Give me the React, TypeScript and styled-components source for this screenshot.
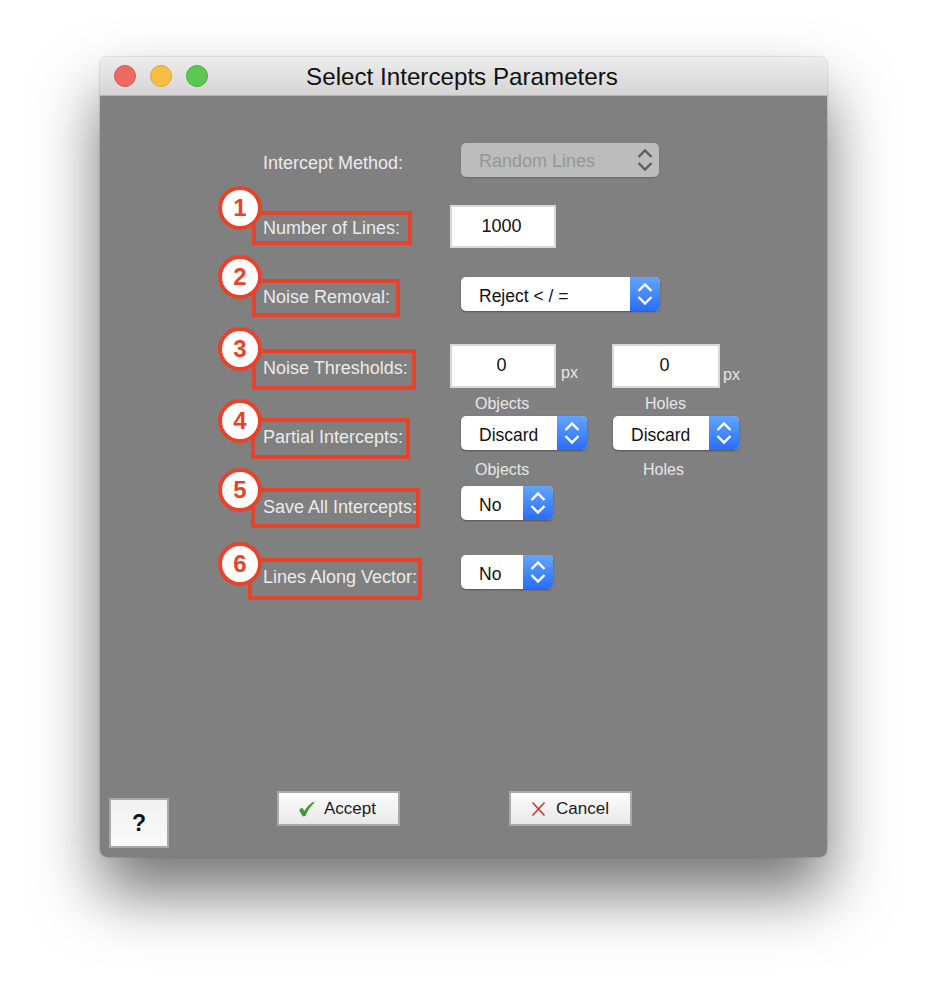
import { ReactNode } from "react";
import styled, { createGlobalStyle } from "styled-components";

const GlobalStyle = createGlobalStyle`
  html, body {
    margin: 0;
    background: #ffffff;
  }
  * {
    box-sizing: border-box;
  }
`;

const Chevrons = ({ color }: { color: string }) => (
  <svg width="16" height="24" viewBox="0 0 16 24" fill="none" stroke={color} strokeWidth="2.4">
    <polyline points="1.5,9 8,2.5 14.5,9" />
    <polyline points="1.5,15 8,21.5 14.5,15" />
  </svg>
);

interface CalloutProps {
  num: number;
  left: number;
  top: number;
  width: number;
  height: number;
  circleTop: number;
}

const Callout = ({ num, left, top, width, height, circleTop }: CalloutProps) => (
  <>
    <RedBox $left={left} $top={top} $w={width} $h={height} />
    <Badge $top={circleTop}>{num}</Badge>
  </>
);

const Select = ({ value, width }: { value: string; width: number }) => (
  <SelectBox $w={width}>
    <SelectText>{value}</SelectText>
    <Stepper>
      <Chevrons color="#ffffff" />
    </Stepper>
  </SelectBox>
);

const FormRow = ({ gap, children }: { gap: number; children: ReactNode }) => (
  <Row $gap={gap}>{children}</Row>
);

const App = () => {
  return (
    <Page>
      <GlobalStyle />
      <Window>
        <TitleBar>
          <Lights>
            <Light $color="#ee6a60" $edge="#d9564c" />
            <Light $color="#f8bd45" $edge="#dfa436" />
            <Light $color="#5cc84f" $edge="#4bae40" />
          </Lights>
          <Title>Select Intercepts Parameters</Title>
        </TitleBar>
        <Body>
          <Form>
            <FormRow gap={47}>
              <Label $drop={10}>Intercept Method:</Label>
              <DisabledSelect>
                <span>Random Lines</span>
                <Chevrons color="#5f5f5f" />
              </DisabledSelect>
            </FormRow>

            <FormRow gap={28}>
              <Label $drop={13}>
                Number of Lines:
                <Callout num={1} left={-11} top={-7} width={160} height={34} circleTop={-32} />
              </Label>
              <NumberInput $w={106} $h={43} $first>1000</NumberInput>
            </FormRow>

            <FormRow gap={29}>
              <Label $drop={10}>
                Noise Removal:
                <Callout num={2} left={-11} top={-8} width={148} height={38} circleTop={-32} />
              </Label>
              <Select value="Reject < / =" width={199} />
            </FormRow>

            <FormRow gap={33}>
              <Label $drop={14}>
                Noise Thresholds:
                <Callout num={3} left={-11} top={-9} width={164} height={41} circleTop={-31} />
              </Label>
              <NumberInput $w={106} $h={44} $first>0</NumberInput>
              <Unit $drop={20} $w={56} $pad={5}>px</Unit>
              <NumberInput $w={108} $h={44}>0</NumberInput>
              <Unit $drop={22} $w={30} $pad={3}>px</Unit>
            </FormRow>

            <CaptionRow $gap={6}>
              <Caption $w={170}>Objects</Caption>
              <Caption>Holes</Caption>
            </CaptionRow>

            <FormRow gap={2}>
              <Label $drop={11}>
                Partial Intercepts:
                <Callout num={4} left={-12} top={-9} width={159} height={41} circleTop={-28} />
              </Label>
              <Select value="Discard" width={126} />
              <RowSpacer />
              <Select value="Discard" width={126} />
            </FormRow>

            <CaptionRow $gap={10}>
              <Caption $w={168}>Objects</Caption>
              <Caption>Holes</Caption>
            </CaptionRow>

            <FormRow gap={6}>
              <Label $drop={11}>
                Save All Intercepts:
                <Callout num={5} left={-12} top={-9} width={169} height={40} circleTop={-29} />
              </Label>
              <Select value="No" width={92} />
            </FormRow>

            <FormRow gap={35}>
              <Label $drop={12}>
                Lines Along Vector:
                <Callout num={6} left={-15} top={-9} width={174} height={42} circleTop={-25} />
              </Label>
              <Select value="No" width={92} />
            </FormRow>
          </Form>

          <Footer>
            <HelpButton>?</HelpButton>
            <ActionButton $offset={108}>
              <svg width="17" height="16" viewBox="0 0 17 16">
                <path d="M1 9 L4 6.6 L6.4 10 C8.6 6.4 11.6 3 15.6 0.8 L16.4 1.8 C12.6 5.2 9.6 9.6 7.4 15 L4.6 15.4 C3.6 12.9 2.4 10.8 1 9 Z" fill="#3f9a2d" />
              </svg>
              Accept
            </ActionButton>
            <ActionButton $offset={109}>
              <svg width="17" height="16" viewBox="0 0 17 16" fill="none" stroke="#d0342c" strokeWidth="1.6">
                <path d="M2.5 1.5 L14.5 14.5 M14.5 1.5 L2.5 14.5" />
              </svg>
              Cancel
            </ActionButton>
          </Footer>
        </Body>
      </Window>
    </Page>
  );
};

export default App;

const fontStack = `"Liberation Sans", Arial, sans-serif`;

const Page = styled.div`
  width: 927px;
  height: 1000px;
  padding: 57px 0 0 100px;
  overflow: hidden;
  background: #ffffff;
  font-family: ${fontStack};
`;

const Window = styled.div`
  width: 727px;
  height: 800px;
  display: flex;
  flex-direction: column;
  border-radius: 7px;
  box-shadow: 0 36px 64px rgba(0, 0, 0, 0.55), 0 0 2px rgba(0, 0, 0, 0.35);
`;

const TitleBar = styled.div`
  height: 39px;
  flex-shrink: 0;
  display: flex;
  align-items: center;
  position: relative;
  border-radius: 7px 7px 0 0;
  border-bottom: 1px solid #b4b4b4;
  background: linear-gradient(#ececec, #d5d5d5);
`;

const Lights = styled.div`
  display: flex;
  gap: 14px;
  padding-left: 14px;
`;

const Light = styled.span<{ $color: string; $edge: string }>`
  width: 22px;
  height: 22px;
  border-radius: 50%;
  background: ${(p) => p.$color};
  border: 1px solid ${(p) => p.$edge};
`;

const Title = styled.div`
  position: absolute;
  left: 0;
  right: 0;
  text-align: center;
  font-size: 24.2px;
  color: #111111;
  padding-right: 3px;
  padding-top: 1px;
`;

const Body = styled.div`
  flex: 1;
  display: flex;
  flex-direction: column;
  justify-content: space-between;
  background: #808080;
  border-radius: 0 0 7px 7px;
`;

const Form = styled.div`
  display: flex;
  flex-direction: column;
  padding-left: 163px;
`;

const Row = styled.div<{ $gap: number }>`
  display: flex;
  align-items: flex-start;
  margin-top: ${(p) => p.$gap}px;
`;

const Label = styled.div<{ $drop: number }>`
  position: relative;
  width: 198px;
  height: 20px;
  line-height: 20px;
  margin-top: ${(p) => p.$drop}px;
  font-size: 18px;
  color: #ebebeb;
  white-space: nowrap;
`;

const RedBox = styled.span<{ $left: number; $top: number; $w: number; $h: number }>`
  position: absolute;
  left: ${(p) => p.$left}px;
  top: ${(p) => p.$top}px;
  width: ${(p) => p.$w}px;
  height: ${(p) => p.$h}px;
  border: 4px solid #e8432a;
`;

const Badge = styled.span<{ $top: number }>`
  position: absolute;
  left: -45px;
  top: ${(p) => p.$top}px;
  width: 44px;
  height: 44px;
  display: flex;
  align-items: center;
  justify-content: center;
  border-radius: 50%;
  border: 4px solid #e8432a;
  background: #ffffff;
  color: #e8432a;
  font-size: 24px;
  font-weight: 700;
`;

const NumberInput = styled.div<{ $w: number; $h: number; $first?: boolean }>`
  width: ${(p) => p.$w}px;
  height: ${(p) => p.$h}px;
  margin-left: ${(p) => (p.$first ? "-11px" : "0")};
  display: flex;
  align-items: center;
  justify-content: center;
  padding-right: 3px;
  padding-bottom: 1px;
  background: #ffffff;
  border: 2px solid #d9d9d9;
  color: #111111;
  font-size: 18px;
`;

const Unit = styled.span<{ $drop: number; $w: number; $pad: number }>`
  width: ${(p) => p.$w}px;
  padding-left: ${(p) => p.$pad}px;
  margin-top: ${(p) => p.$drop}px;
  font-size: 16px;
  color: #e6e6e6;
`;

const CaptionRow = styled.div<{ $gap: number }>`
  display: flex;
  height: 20px;
  line-height: 20px;
  margin-top: ${(p) => p.$gap}px;
  padding-left: 212px;
`;

const Caption = styled.span<{ $w?: number }>`
  width: ${(p) => (p.$w ? `${p.$w}px` : "auto")};
  font-size: 16px;
  color: #e6e6e6;
`;

const SelectBox = styled.div<{ $w: number }>`
  width: ${(p) => p.$w}px;
  height: 34px;
  display: flex;
  align-items: stretch;
  justify-content: space-between;
  overflow: hidden;
  border-radius: 5px;
  background: #ffffff;
  box-shadow: 0 1px 2px rgba(0, 0, 0, 0.35);
`;

const SelectText = styled.span`
  padding-left: 18px;
  line-height: 38px;
  font-size: 17.5px;
  color: #111111;
  white-space: nowrap;
`;

const Stepper = styled.span`
  width: 30px;
  display: flex;
  align-items: center;
  justify-content: center;
  background: linear-gradient(#62a5fb, #2a6df9);
`;

const RowSpacer = styled.span`
  width: 26px;
`;

const DisabledSelect = styled.div`
  width: 198px;
  height: 34px;
  display: flex;
  align-items: center;
  justify-content: space-between;
  padding: 2px 6px 0 18px;
  border-radius: 5px;
  background: #bcbcbc;
  color: #969696;
  font-size: 18px;
  box-shadow: 0 1px 1px rgba(0, 0, 0, 0.2);

  svg {
    margin-top: -2px;
  }
`;

const Footer = styled.div`
  display: flex;
  align-items: flex-start;
  padding: 0 0 9px 9px;
`;

const HelpButton = styled.div`
  width: 60px;
  height: 50px;
  display: flex;
  align-items: center;
  justify-content: center;
  border: 2px solid #a9a9a9;
  background: linear-gradient(#f0f0f0, #fafafa);
  color: #111111;
  font-size: 23px;
  font-weight: 700;
`;

const ActionButton = styled.div<{ $offset: number }>`
  width: 123px;
  height: 35px;
  margin-left: ${(p) => p.$offset}px;
  margin-top: -7px;
  display: flex;
  align-items: center;
  gap: 9px;
  padding-left: 19px;
  border: 2px solid #a9a9a9;
  background: linear-gradient(#fbfbfb, #e9e9e9);
  color: #1a1a1a;
  font-size: 17px;
`;
